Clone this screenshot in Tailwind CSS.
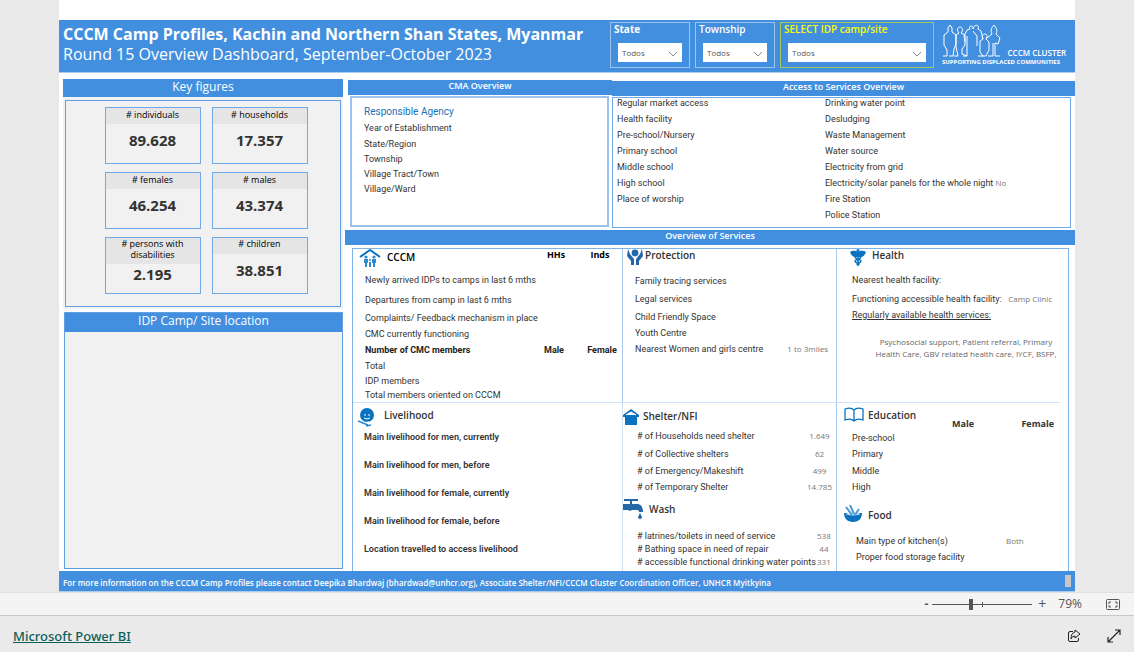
<!DOCTYPE html>
<html lang="en">
<head>
<meta charset="utf-8">
<title>CCCM Camp Profiles</title>
<script src="https://cdn.jsdelivr.net/npm/@tailwindcss/browser@4"></script>
</head>
<body class="flex min-h-screen flex-col bg-[#e9e9e9] font-['Open_Sans','Noto_Sans',sans-serif] text-[9px] leading-3 text-[#333]">
<main class="mx-[59px] flex grow flex-col bg-white pt-5">
  <header class="flex h-[53px] items-start border-b border-[#a9cbf0] bg-[#428fdf] pl-1 pr-[9px] text-white">
    <h1 class="grow whitespace-nowrap pt-1 text-base leading-5 font-bold">CCCM Camp Profiles, Kachin and Northern Shan States, Myanmar<br><span class="font-medium">Round 15 Overview Dashboard, September-October 2023</span></h1>
    <div class="mt-0.5 flex gap-[5px]">
      <label class="flex h-[46px] w-20 flex-col border border-[#9cc4ef] px-[3px] pb-1">
        <span class="text-[10px] leading-3 font-bold">State</span>
        <span class="relative mx-1 mt-2 block"><select class="h-[19px] w-full appearance-none bg-white px-1 text-[8px] text-[#555]"><option>Todos</option></select><svg class="pointer-events-none absolute right-1 top-2 h-1.5 w-2.5" viewBox="0 0 10 6" fill="none" stroke="#888"><path d="M1 1l4 4 4-4"/></svg></span>
      </label>
      <label class="flex h-[46px] w-20 flex-col border border-[#9cc4ef] px-[3px] pb-1">
        <span class="text-[10px] leading-3 font-semibold">Township</span>
        <span class="relative mx-1 mt-2 block"><select class="h-[19px] w-full appearance-none bg-white px-1 text-[8px] text-[#555]"><option>Todos</option></select><svg class="pointer-events-none absolute right-1 top-2 h-1.5 w-2.5" viewBox="0 0 10 6" fill="none" stroke="#888"><path d="M1 1l4 4 4-4"/></svg></span>
      </label>
      <label class="flex h-[46px] w-[154px] flex-col border border-[#a3c860] px-[3px] pb-1">
        <span class="text-[10px] leading-3 font-semibold text-[#fcfc08]">SELECT IDP camp/site</span>
        <span class="relative mx-1 mt-2 block"><select class="h-[19px] w-full appearance-none bg-white px-1 text-[8px] text-[#555]"><option>Todos</option></select><svg class="pointer-events-none absolute right-1 top-2 h-1.5 w-2.5" viewBox="0 0 10 6" fill="none" stroke="#888"><path d="M1 1l4 4 4-4"/></svg></span>
      </label>
    </div>
    <div class="ml-2 mt-1 flex w-[124px] flex-col font-semibold">
      <div class="flex items-end justify-between">
        <svg class="h-[34px] w-[60px]" viewBox="0 0 60 34" fill="none" stroke="#fff" stroke-linejoin="round"><path d="M1 32h4v-6l-3-5V11l4-3V4l2-3 2 3v4l4 3v9l-2 5-1 7H7M12 32h4l-2-9V11l3-2c-3-3-1-6 1-6s4 3 1 6l4 2v10l-3 4v5l5 2h-4M23 18l-1-6 3-6 3-1c-2-4 4-4 3 0 1-5 7-5 5 0l3 2 2 8M25 12v20M31 7l4 5v10M36 32h5l-3-4V17l3-2c-2-3 0-5 2-5s3 2 1 5l3 3v8l-3 6h-4M45 14l5-4c-2-4 0-7 2-9 2 3 4 5 2 9l4 4-2 6-3-1v13h5M46 32h5V19"/></svg>
        <span class="text-[8px] leading-[10px] font-semibold">CCCM CLUSTER</span>
      </div>
      <span class="whitespace-nowrap text-[6px] leading-2 font-bold">SUPPORTING DISPLACED COMMUNITIES</span>
    </div>
  </header>

  <div class="flex grow gap-0.5 pl-1">
    <div class="flex w-[280px] shrink-0 flex-col pt-1.5">
      <section class="bg-[#f1f1f1] pb-0.5">
        <h2 class="h-[18px] bg-[#428fdf] text-center text-xs leading-4 font-medium text-white">Key figures</h2>
        <div class="mx-0.5 mt-[3px] grid grid-cols-[96px_96px] justify-center gap-x-[11px] gap-y-2 border border-[#5f9fe2] pt-1.5 pb-3 pl-1.5 text-center text-black">
          <div class="h-[57px] border border-[#6fa9e6]"><h3 class="h-4 bg-[#e5e5e5] leading-[14px]">#&nbsp;individuals</h3><p class="pt-1.5 text-[15px] leading-5 font-bold text-[#333]">89.628</p></div>
          <div class="h-[57px] border border-[#6fa9e6]"><h3 class="h-4 bg-[#e5e5e5] leading-[14px]"># households</h3><p class="pt-1.5 text-[15px] leading-5 font-bold text-[#333]">17.357</p></div>
          <div class="h-[57px] border border-[#6fa9e6]"><h3 class="h-4 bg-[#e5e5e5] leading-[14px]"># females</h3><p class="pt-1.5 text-[15px] leading-5 font-bold text-[#333]">46.254</p></div>
          <div class="h-[57px] border border-[#6fa9e6]"><h3 class="h-4 bg-[#e5e5e5] leading-[14px]"># males</h3><p class="pt-1.5 text-[15px] leading-5 font-bold text-[#333]">43.374</p></div>
          <div class="h-[57px] border border-[#6fa9e6]"><h3 class="h-[26px] bg-[#e5e5e5] px-2 leading-[11px]"># persons with disabilities</h3><p class="text-[15px] leading-5 font-bold text-[#333]">2.195</p></div>
          <div class="h-[57px] border border-[#6fa9e6]"><h3 class="h-4 bg-[#e5e5e5] leading-3"># children</h3><p class="pt-1.5 text-[15px] leading-5 font-bold text-[#333]">38.851</p></div>
        </div>
      </section>
      <section class="ml-px mt-[3px] mb-0.5 flex grow flex-col border border-[#5f9fe2] bg-[#f1f1f1]">
        <h2 class="h-[19px] bg-[#428fdf] text-center text-xs leading-4 font-medium text-white">IDP Camp/ Site location</h2>
      </section>
    </div>

    <div class="flex grow flex-col pt-[7px]">
      <div class="flex">
        <section class="ml-[3px] w-[264px] shrink-0">
          <h2 class="h-[15px] bg-[#428fdf] text-center leading-3 font-semibold text-white">CMA Overview</h2>
          <div class="mt-px ml-0.5 mr-[3px] h-[131px] border-2 border-[#9cc3ef] px-3 pt-1.5 font-[Roboto,sans-serif]">
            <p class="text-[10px] leading-4 text-[#1a6fb5]">Responsible Agency</p>
            <ul class="leading-[15px]"><li class="pt-px">Year of Establishment</li><li class="pt-px">State/Region</li><li>Township</li><li>Village Tract/Town</li><li>Village/Ward</li></ul>
          </div>
        </section>
        <section class="grow pt-px">
          <h2 class="h-[15px] bg-[#428fdf] text-center leading-3 font-semibold text-white">Access to Services Overview</h2>
          <div class="mt-px mr-1 grid h-[131px] grid-cols-[208px_1fr] border border-[#6fa9e6] pl-1 font-[Roboto,sans-serif] leading-4">
            <ul class="-mt-[3px]"><li>Regular market access</li><li>Health facility</li><li>Pre-school/Nursery</li><li>Primary school</li><li>Middle school</li><li>High school</li><li>Place of worship</li></ul>
            <ul class="-mt-[3px]"><li>Drinking water point</li><li>Desludging</li><li>Waste Management</li><li>Water source</li><li>Electricity from grid</li><li>Electricity/solar panels for the whole night <span class="font-['Open_Sans',sans-serif] text-[8px] text-[#777]">No</span></li><li>Fire Station</li><li>Police Station</li></ul>
          </div>
        </section>
      </div>

      <h2 class="mt-0.5 h-[15px] bg-[#428fdf] text-center leading-3 font-semibold text-white">Overview of Services</h2>
      <div class="mt-[3px] ml-[7px] mr-1.5 grid grow grid-cols-[270px_214px_1fr] grid-rows-[154px_1fr] border border-b-0 border-[#7db1ea]">
        <section class="border-r border-b border-r-[#a9cbf0] border-b-[#cfe2f7] pl-3">
          <table class="w-full table-fixed text-left">
            <colgroup><col><col class="w-12"><col class="w-11"></colgroup>
            <thead><tr class="h-[21px] align-top text-black"><th class="flex items-start gap-1.5 text-[10px] leading-4 font-semibold"><svg class="-ml-1.5 h-[18px] w-[22px]" viewBox="0 0 22 18"><path d="M1 8L11 1l10 7" fill="none" stroke="#0b72c0" stroke-width="2"/><g fill="#2a8ad0"><circle cx="7" cy="8" r="1.6"/><path d="M5 10h4v4H8v4H6v-4H5z"/><circle cx="15" cy="8" r="1.6"/><path d="M13 10h4v4h-1v4h-2v-4h-1z"/><circle cx="11" cy="11" r="1"/><path d="M10 13h2v5h-2z"/></g></svg>CCCM</th><th class="pl-1 text-center">HHs</th><th class="text-center">Inds</th></tr></thead>
            <tbody class="font-[Roboto,sans-serif]">
              <tr class="h-5"><td colspan="3">Newly arrived IDPs to camps in last 6 mths</td></tr>
              <tr class="h-5"><td colspan="3">Departures from camp in last 6 mths</td></tr>
              <tr class="h-4"><td colspan="3">Complaints/ Feedback mechanism in place</td></tr>
              <tr class="h-4"><td colspan="3">CMC currently functioning</td></tr>
              <tr class="h-4 text-[#222]"><th>Number of CMC members</th><th class="text-center">Male</th><th class="pl-1 text-center">Female</th></tr>
              <tr class="h-4"><td colspan="3">Total</td></tr>
              <tr class="h-3.5"><td colspan="3">IDP members</td></tr>
              <tr class="h-3.5"><td colspan="3">Total members oriented on CCCM</td></tr>
            </tbody>
          </table>
        </section>
        <section class="border-r border-b border-r-[#a9cbf0] border-b-[#cfe2f7] pl-3 pr-2">
          <h3 class="-ml-2 flex h-[23px] items-start gap-0.5 text-[10px] leading-3 font-semibold"><svg class="h-4 w-4" viewBox="0 0 16 16" fill="#2467a8"><circle cx="8" cy="4" r="3.4"/><path d="M1 0l2 5 4 5v6H4v-4L0 7zM15 0l-2 5-4 5v6h3v-4l4-5z"/></svg>Protection</h3>
          <table class="w-full text-left font-[Roboto,sans-serif]"><tbody>
            <tr class="h-[18px]"><td colspan="2">Family tracing services</td></tr>
            <tr class="h-[18px]"><td colspan="2">Legal services</td></tr>
            <tr class="h-[17px]"><td colspan="2">Child Friendly Space</td></tr>
            <tr class="h-4"><td colspan="2">Youth Centre</td></tr>
            <tr class="h-4"><td>Nearest Women and girls centre</td><td class="text-right font-['Open_Sans',sans-serif] text-[8px] text-[#777]">1 to 3miles</td></tr>
          </tbody></table>
        </section>
        <section class="mr-2 border-b border-[#cfe2f7] pl-[15px]">
          <h3 class="flex h-[21px] items-start gap-1.5 text-[10px] leading-3 font-semibold"><svg class="-ml-0.5 h-[17px] w-4" viewBox="0 0 16 17"><circle cx="8" cy="1.5" r="1.5" fill="#0b72c0"/><path d="M0 3c3-2 6-1 8 0 2-1 5-2 8 0-1 3-3 5-5 5H5C3 8 1 6 0 3z" fill="#0b72c0"/><path d="M8 3v14M5 8c1 3 6 2 6 4s-4 2-4 4M11 8c-1 3-6 2-6 4s4 2 4 4" fill="none" stroke="#0b72c0" stroke-width="1.5"/></svg>Health</h3>
          <dl class="font-[Roboto,sans-serif]">
            <div class="h-5 leading-5"><dt>Nearest health facility:</dt></div>
            <div class="flex h-[18px] items-center justify-between pr-2"><dt>Functioning accessible health facility:</dt><dd class="font-['Open_Sans',sans-serif] text-[8px] text-[#777]">Camp Clinic</dd></div>
            <div><dt class="leading-[14px] underline">Regularly available health services:</dt><dd class="pt-3.5 pl-5 text-center font-['Open_Sans',sans-serif] text-[8px] leading-3 text-[#666]">Psychosocial support, Patient referral, Primary Health Care, GBV related health care, IYCF, BSFP,</dd></div>
          </dl>
        </section>
        <section class="border-r border-[#cfe2f7] pt-1 pl-[11px] font-semibold">
          <h3 class="-ml-1.5 flex h-4 items-start gap-2 text-[10px] leading-4"><svg class="h-5 w-[18px]" viewBox="0 0 18 20"><circle cx="9" cy="8" r="7" fill="#0b72c0"/><path d="M6 8h2m2 0h2M6 11q3 2 6 0" stroke="#fff" fill="none"/><path d="M0 14l6 3 5-1" fill="none" stroke="#fff" stroke-width="3"/><path d="M0 14l5 2 5 2M8 19l5-1" fill="none" stroke="#2a86cc" stroke-width="1.6"/></svg>Livelihood</h3>
          <ul class="font-[Roboto,sans-serif] leading-7"><li>Main livelihood for men, currently</li><li>Main livelihood for men, before</li><li>Main livelihood for female, currently</li><li>Main livelihood for female, before</li><li>Location travelled to access livelihood</li></ul>
        </section>
        <section class="border-r border-[#a9cbf0] pt-1 pl-3.5 pr-1">
          <h3 class="-ml-3.5 flex h-5 items-start gap-1 text-[10px] leading-[18px] font-semibold"><svg class="mt-0.5 h-4 w-4" viewBox="0 0 16 16" fill="#0b72c0"><path d="M8 0l8 6v2H0V6zM2 7h12v9H2z"/><path d="M3 6l5-3 5 3" stroke="#fff" fill="#fff"/></svg>Shelter/NFI</h3>
          <table class="w-full text-left font-[Roboto,sans-serif]"><tbody>
            <tr class="h-[18px]"><td># of Households need shelter</td><td class="w-6 text-center font-['Open_Sans',sans-serif] text-[8px] text-[#777]">1.649</td></tr>
            <tr class="h-[17px]"><td># of Collective shelters</td><td class="text-center font-['Open_Sans',sans-serif] text-[8px] text-[#777]">62</td></tr>
            <tr class="h-[17px]"><td># of Emergency/Makeshift</td><td class="text-center font-['Open_Sans',sans-serif] text-[8px] text-[#777]">499</td></tr>
            <tr class="h-4"><td># of Temporary Shelter</td><td class="text-center font-['Open_Sans',sans-serif] text-[8px] text-[#777]">14.785</td></tr>
          </tbody></table>
          <h3 class="-ml-3.5 mt-1 flex h-[30px] items-start gap-1.5 text-[10px] leading-5 font-semibold"><svg class="h-[22px] w-5" viewBox="0 0 20 22" fill="#2467a8"><path d="M1 0h14v2H9v3h5c4 0 6 3 6 8h-4c0-2-1-2-3-2H9l-2 1-2-1H0V5h7V2H1zM17 14l2 4a2 2 0 1 1-4 0z"/></svg>Wash</h3>
          <table class="w-full text-left whitespace-nowrap font-[Roboto,sans-serif]"><tbody>
            <tr class="h-[13px]"><td># latrines/toilets in need of service</td><td class="w-6 text-center font-['Open_Sans',sans-serif] text-[8px] text-[#777]">538</td></tr>
            <tr class="h-[13px]"><td># Bathing space in need of repair</td><td class="text-center font-['Open_Sans',sans-serif] text-[8px] text-[#777]">44</td></tr>
            <tr class="h-[13px]"><td># accessible functional drinking water points</td><td class="text-center font-['Open_Sans',sans-serif] text-[8px] text-[#777]">331</td></tr>
          </tbody></table>
        </section>
        <section class="pt-1 pl-[15px] pr-2">
          <table class="w-full table-fixed text-left">
            <colgroup><col><col class="w-11"><col class="w-16"></colgroup>
            <thead><tr class="h-[23px]"><th class="flex items-start gap-1 text-[10px] leading-4 font-semibold"><svg class="-ml-2 h-4 w-5 shrink-0" viewBox="0 0 20 16" fill="none" stroke="#0b72c0" stroke-width="1.3"><path d="M10 3C8 1 4 1 1 2v11c3-1 7-1 9 1 2-2 6-2 9-1V2c-3-1-7-1-9 1v11"/></svg>Education</th><th class="align-bottom">Male</th><th class="pr-1.5 text-right align-bottom">Female</th></tr></thead>
            <tbody class="font-[Roboto,sans-serif]"><tr class="h-4"><td>Pre-school</td></tr><tr class="h-4"><td>Primary</td></tr><tr class="h-[17px]"><td>Middle</td></tr><tr class="h-4"><td>High</td></tr></tbody>
          </table>
          <h3 class="-ml-2 mt-2.5 flex h-7 items-start gap-1.5 text-[10px] leading-5 font-semibold"><svg class="h-[18px] w-[18px]" viewBox="0 0 18 18"><path d="M0 8h18c0 5-3 9-9 9S0 13 0 8z" fill="#0b72c0"/><ellipse cx="9" cy="9" rx="7" ry="1.5" fill="#cfe3f5"/><path d="M2 2l6 8M6 0l4 9M15 4l-4 6" stroke="#4a9ad6" stroke-width="2"/></svg>Food</h3>
          <table class="ml-1 w-full text-left font-[Roboto,sans-serif]"><tbody>
            <tr class="h-4"><td>Main type of kitchen(s)</td><td class="w-[58px] font-['Open_Sans',sans-serif] text-[8px] text-[#777]">Both</td></tr>
            <tr class="h-4"><td>Proper food storage facility</td><td></td></tr>
          </tbody></table>
        </section>
      </div>
    </div>
  </div>
  <footer class="flex h-[21px] items-center justify-between border-b border-[#a9cbf0] bg-[#428fdf] pl-1 pr-1 text-[8px] font-semibold text-white">
    <p class="pt-1">For more information on the CCCM Camp Profiles please contact Deepika Bhardwaj (bhardwad@unhcr.org), Associate Shelter/NFI/CCCM Cluster Coordination Officer, UNHCR Myitkyina</p>
    <span class="h-3 w-1.5 bg-[#c8c8c8]"></span>
  </footer>
</main>
<div class="flex h-6 items-center justify-end border-t border-b border-t-[#e1e1e1] border-b-[#c8c8c8] bg-[#f4f4f4] pr-3.5 text-xs leading-4 text-[#555]">
  <button aria-label="Zoom out" class="font-bold">-</button>
  <div class="relative mx-1 h-4 w-[100px]"><input aria-label="Zoom" type="range" min="0" max="100" value="39" class="absolute inset-0 w-full opacity-0"><svg class="h-4 w-full" viewBox="0 0 100 16" fill="#555"><path d="M0 8h100v1H0zM50 6h1v5h-1zM37 3h4v11h-4z"/></svg></div>
  <button aria-label="Zoom in" class="mx-0.5 text-sm leading-4">+</button>
  <span class="mx-2.5">79%</span>
  <button aria-label="Fit to page" class="ml-3.5"><svg class="h-[11px] w-3.5" viewBox="0 0 14 11" fill="none" stroke="#555"><rect x=".5" y=".5" width="13" height="10" rx="1"/><path d="M5 3H3v2M9 3h2v2M5 8H3V6M9 8h2V6"/></svg></button>
</div>
<div class="flex h-9 items-center justify-between bg-[#eaeaea] px-[13px] pt-1">
  <a href="#" class="font-['Noto_Sans',sans-serif] text-[13px] leading-5 font-medium text-[#0b6158] underline">Microsoft Power BI</a>
  <div class="flex gap-[26px]">
    <button aria-label="Share"><svg class="h-3.5 w-3.5" viewBox="0 0 14 14" fill="none" stroke="#222"><path d="M6 2.500H3Q1.500 2.500 1.500 4v7Q1.500 12.500 3 12.500h7q1.500 0 1.500-1.500V9M8 1l5 4-5 4V7Q5 7 4 10q0-6 4-7z"/></svg></button>
    <button aria-label="Full screen"><svg class="h-3.5 w-3.5" viewBox="0 0 14 14" fill="none" stroke="#222" stroke-width="1.200"><path d="M8 1h5v5M13 1L1 13M1 8v5h5"/></svg></button>
  </div>
</div>
</body>
</html>
